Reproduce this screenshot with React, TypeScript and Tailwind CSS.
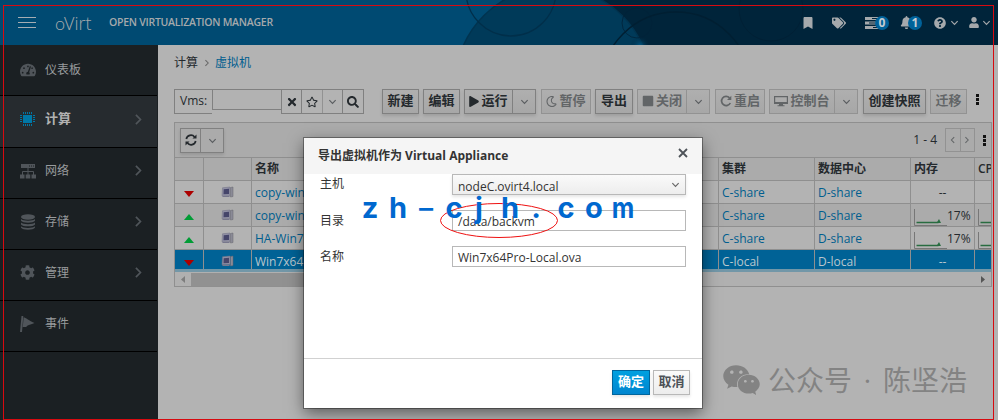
import { ReactNode } from 'react';
import {
  FaBell,
  FaBookmark,
  FaCog,
  FaPlay,
  FaQuestionCircle,
  FaRegMoon,
  FaRegStar,
  FaSearch,
  FaSquare,
  FaTachometerAlt,
  FaTags,
  FaTimes,
  FaUser,
  FaWeixin,
} from 'react-icons/fa';

type ChevronProps = { className?: string; direction?: 'down' | 'left' | 'right' };

const chevronPaths = {
  down: 'M1.5 3.5L5 7L8.5 3.5',
  left: 'M6.5 1.5L3 5L6.5 8.5',
  right: 'M3 1.5L6.5 5L3 8.5',
};

const Chevron = ({ className = 'size-[9px] text-[#5a5d60]', direction = 'down' }: ChevronProps) => (
  <svg viewBox="0 0 10 10" className={className} fill="none" stroke="currentColor" strokeWidth="1.3">
    <path d={chevronPaths[direction]} />
  </svg>
);

const ChipIcon = () => (
  <svg viewBox="0 0 16 16" className="size-4 text-[#0077a6]" fill="currentColor">
    <rect x="3" y="4" width="9" height="8" />
    <path
      d="M3.5 1v2M5.5 1v2M7.5 1v2M9.5 1v2M11.5 1v2M3.5 13v2M5.5 13v2M7.5 13v2M9.5 13v2M11.5 13v2M0 4.5h2M0 6.5h2M0 8.5h2M0 10.5h2M13 4.500h2M13 6.500h2M13 8.500h2M13 10.500h2"
      stroke="currentColor"
      strokeWidth="1"
    />
  </svg>
);

const NetworkIcon = () => (
  <svg viewBox="0 0 16 16" className="size-4" fill="currentColor">
    <path d="M1 1h14v4H1zM0 11.500h4.500v4H0zM5.700 11.500h4.600v4H5.700zM11.500 11.500H16v4h-4.500z" />
    <path d="M8 5v7M2.500 12V8.500h11V12" fill="none" stroke="currentColor" />
    <path d="M9 3h1M11 3h1M13 3h1" stroke="#1b2023" />
  </svg>
);

const StorageIcon = () => (
  <svg viewBox="0 0 16 16" className="size-4" fill="currentColor">
    <ellipse cx="8" cy="3" rx="7" ry="2.7" />
    <path d="M1 5c1.500 2.300 12.500 2.300 14 0v1.800c-1.500 2.600-12.500 2.600-14 0zM1 8.600c1.500 2.300 12.500 2.300 14 0v1.800c-1.500 2.600-12.500 2.600-14 0zM1 12.200c1.500 2.300 12.500 2.300 14 0v1.400c-1.500 3-12.500 3-14 0z" />
  </svg>
);

const FlagIcon = () => (
  <svg viewBox="0 0 16 16" className="size-4" fill="currentColor">
    <path d="M1.500 0h1.800L2 16H0zM3.600 1.500C6 1.500 8 4 14.500 7 11 8.500 8 8.500 6 11L2.800 11z" />
  </svg>
);

const RefreshIcon = () => (
  <svg viewBox="0 0 12 12" className="size-3" fill="none" stroke="currentColor" strokeWidth="1.7">
    <path d="M1.300 5A4.700 4.700 0 0 1 9.600 3M10.700 7A4.700 4.700 0 0 1 2.400 9" />
    <path d="M11.500.6v4H7.500zM.5 11.400v-4h4z" fill="currentColor" stroke="none" />
  </svg>
);

const RestartIcon = () => (
  <svg viewBox="0 0 12 12" className="size-3" fill="none" stroke="currentColor" strokeWidth="1.700">
    <path d="M9.500 2.800A4.600 4.600 0 1 0 10.300 8" />
    <path d="M11.300.7v4.300H7z" fill="currentColor" stroke="none" />
  </svg>
);

const ScreenIcon = () => (
  <svg viewBox="0 0 14 12" className="h-3 w-[14px]" fill="currentColor">
    <path fillRule="evenodd" d="M0 1h14v8H9v1.200h1.500v1H3.500v-1H5V9H0zM1.200 2.200v4.800h11.600V2.200z" />
  </svg>
);

const VmIcon = () => (
  <svg viewBox="0 0 13 12" className="h-3 w-[13px]">
    <path d="M9.500 1.500L12 1v9.500l-2.500.5z" fill="#8a8a96" stroke="#66666f" strokeWidth=".5" />
    <path d="M1.500 1.800L9 1v8.500l-8 .3z" fill="#9090a4" stroke="#707084" strokeWidth=".5" />
    <path d="M2.700 3.200L8 2.700v5.200l-5.500.4z" fill="#45456a" />
    <path d="M1.500 10h7v1h-7z" fill="#77778c" />
  </svg>
);

const Sparkline = () => (
  <svg viewBox="0 0 33 17" className="h-[17px] w-[33px] shrink-0">
    <path d="M.5 0v16.500H33" fill="none" stroke="#777" />
    <path d="M2.500 13.500h22" stroke="#286c40" strokeWidth="1.500" />
    <path d="M22.500 14l2.500-4 2 4z" fill="#286c40" />
  </svg>
);

const Kebab = ({ className }: { className: string }) => (
  <div className={`flex w-[3px] flex-col gap-px ${className}`}>
    <i className="size-[3px] bg-[#111]" />
    <i className="size-[3px] bg-[#111]" />
    <i className="size-[3px] bg-[#111]" />
  </div>
);

const menu = [
  { label: '仪表板', icon: <FaTachometerAlt className="size-4" />, height: 'h-[51px] pb-px', arrow: false },
  { label: '计算', icon: <ChipIcon />, height: 'h-[52px] pb-[5px]', arrow: true, active: true },
  { label: '网络', icon: <NetworkIcon />, height: 'h-[51px] pb-[5px]', arrow: true },
  { label: '存储', icon: <StorageIcon />, height: 'h-[51px] pb-[5px]', arrow: true },
  { label: '管理', icon: <FaCog className="size-[15px]" />, height: 'h-[51px] pb-[5px]', arrow: true },
  { label: '事件', icon: <FlagIcon />, height: 'h-[51px] pb-1', arrow: false },
];

const rows = [
  { name: 'copy-win7x64', cluster: 'C-share', center: 'D-share', up: false, memory: '' },
  { name: 'copy-win7x64-2', cluster: 'C-share', center: 'D-share', up: true, memory: '17%' },
  { name: 'HA-Win7x64', cluster: 'C-share', center: 'D-share', up: true, memory: '17%' },
  { name: 'Win7x64Pro', cluster: 'C-local', center: 'D-local', up: false, memory: '', selected: true },
];

type ActionProps = { label: string; width: string; icon?: ReactNode; split?: boolean; disabled?: boolean };

const actions: (ActionProps & { margin: string })[] = [
  { label: '新建', width: 'w-[37px]', margin: 'ml-[18px]' },
  { label: '编辑', width: 'w-[37px]', margin: 'ml-1' },
  { label: '运行', width: 'w-[72px]', margin: 'ml-1', icon: <FaPlay className="h-[11px] w-[10px]" />, split: true },
  { label: '暂停', width: 'w-[50px]', margin: 'ml-[5px]', icon: <FaRegMoon className="size-[11px]" />, disabled: true },
  { label: '导出', width: 'w-[38px]', margin: 'ml-1' },
  { label: '关闭', width: 'w-[73px]', margin: 'ml-1', icon: <FaSquare className="size-[12px]" />, split: true, disabled: true },
  { label: '重启', width: 'w-[50px]', margin: 'ml-[5px]', icon: <RestartIcon />, disabled: true },
  { label: '控制台', width: 'w-[89px]', margin: 'ml-1', icon: <ScreenIcon />, split: true, disabled: true },
  { label: '创建快照', width: 'w-[63px]', margin: 'ml-[5px]' },
  { label: '迁移', width: 'w-[37px]', margin: 'ml-1', disabled: true },
];

const Action = ({ label, width, icon, split, disabled }: ActionProps) => (
  <button
    className={`flex h-[25px] shrink-0 border bg-linear-to-b from-[#afafaf] to-[#a7a7a7] text-[13px] font-bold ${width} ${
      disabled ? 'border-[#929292] text-[#626567]' : 'border-[#808080] text-[#24292d] shadow-[0_2px_3px_rgba(0,0,0,0.12)]'
    }`}
  >
    <span className="flex h-full flex-1 items-center justify-center gap-[2px] pb-px whitespace-nowrap">
      {icon}
      {label}
    </span>
    {split && (
      <span className="flex h-full w-[23px] items-center justify-center border-l border-inherit">
        <Chevron />
      </span>
    )}
  </button>
);

const Header = () => (
  <header className="relative h-[45px] w-full shrink-0 overflow-hidden bg-[#00243a] text-[#a5a9ac]">
    <svg viewBox="0 0 998 45" className="absolute inset-0 h-[45px] w-[998px]" fill="none">
      <defs>
        <radialGradient id="glow" gradientUnits="userSpaceOnUse" cx="640" cy="46" r="10">
          <stop offset="0" stopColor="#005a88" />
          <stop offset="1" stopColor="#00243a" stopOpacity="0" />
        </radialGradient>
      </defs>
      <path d="M0 0H503Q479 16 464 45H0z" fill="#004a72" />
      <circle cx="553" cy="85" r="98" fill="#003a59" />
      <circle cx="553" cy="85" r="98" stroke="#003450" strokeWidth="1.500" />
      <circle cx="511" cy="-9" r="45" stroke="#002f4a" strokeWidth="1.300" />
      <circle cx="637" cy="23" r="15" stroke="#002238" strokeWidth=".8" />
      <circle cx="676" cy="87" r="75" stroke="#001f32" strokeWidth="1.500" />
      <circle cx="771" cy="9" r="32" stroke="#002033" strokeWidth=".8" />
      <circle cx="640" cy="46" r="10" fill="url(#glow)" />
    </svg>
    <div className="relative flex h-full items-center">
      <div className="ml-[18px] flex w-[18px] flex-col gap-[4px]">
        <i className="h-px bg-[#a5adb3]" />
        <i className="h-px bg-[#a5adb3]" />
        <i className="h-px bg-[#a5adb3]" />
      </div>
      <span className="ml-[19px] w-[54px] font-[Lato] text-[18px] leading-none font-light">
        o<span className="-ml-px font-['Open_Sans']">Virt</span>
      </span>
      <span className="text-[10.5px] font-semibold tracking-[-0.26px] whitespace-nowrap">OPEN VIRTUALIZATION MANAGER</span>
      <div className="ml-auto flex items-center">
        <FaBookmark className="h-3 w-[10px]" />
        <FaTags className="ml-[19px] size-[14px]" />
        <div className="ml-[19px] flex items-center">
          <svg viewBox="0 0 14 12" className="h-3 w-[14px]" fill="currentColor">
            <path d="M0 0h14v3H0zM0 4.500h14v3H0zM0 9h14v3H0z" />
            <path d="M7 1.500h5M4 6h6M8 10.500h4" stroke="#00243a" />
          </svg>
          <b className="-ml-[4px] flex size-[14px] items-center justify-center rounded-full bg-[#00629a] text-[12px] text-[#c3ccd2]">0</b>
        </div>
        <div className="ml-[11px] flex items-center">
          <FaBell className="size-[13px]" />
          <b className="-ml-[5px] flex size-[14px] items-center justify-center rounded-full bg-[#00629a] text-[12px] text-[#c3ccd2]">1</b>
        </div>
        <FaQuestionCircle className="ml-[12px] size-[12px]" />
        <Chevron className="ml-[4px] size-[9px]" />
        <FaUser className="ml-[10px] h-[11px] w-[10px]" />
        <Chevron className="mr-[7px] ml-[3px] size-[9px]" />
      </div>
    </div>
  </header>
);

const Sidebar = () => (
  <nav className="w-[158px] shrink-0 bg-[#1b2023]">
    {menu.map((item) => (
      <a
        key={item.label}
        className={`flex w-[157px] items-center border-b border-black pl-5 ${item.height} ${
          item.active ? 'bg-[#262b2f] font-bold text-[#b2b2b2]' : 'text-[#989b9d]'
        }`}
      >
        <span className="w-[25px] text-[#50555a]">{item.icon}</span>
        <span className={item.active ? 'text-[13px]' : 'text-[12px]'}>{item.label}</span>
        {item.arrow && <Chevron direction="right" className="mr-[12px] ml-auto size-[13px] text-[#50555a]" />}
      </a>
    ))}
  </nav>
);

const VmTable = () => (
  <section className="mt-2 h-[165px] w-[818px] overflow-hidden border border-[#8f8f8f] bg-[#ababab]">
    <div className="flex h-[34px] items-center">
      <div className="ml-[5px] flex h-[25px] w-[44px] border border-[#808080] text-[#24292d] shadow-[0_2px_3px_rgba(0,0,0,0.12)]">
        <span className="flex w-5 items-center justify-center border-r border-[#808080]">
          <RefreshIcon />
        </span>
        <span className="flex flex-1 items-center justify-center">
          <Chevron />
        </span>
      </div>
      <span className="ml-auto text-[12px]">1 - 4</span>
      <div className="ml-2 flex h-6 w-[30px] border border-[#929292] text-[#626567]">
        <span className="flex flex-1 items-center justify-center border-r border-[#929292]">
          <Chevron direction="left" className="size-2" />
        </span>
        <span className="flex flex-1 items-center justify-center">
          <Chevron direction="right" className="size-2" />
        </span>
      </div>
      <Kebab className="mr-[5px] ml-2" />
    </div>
    <div className="grid h-6 grid-cols-[29px_48px_467px_96px_96px_64px_17px] border-y border-[#8f8f8f] text-[12px] leading-[22px] font-semibold text-[#24292d] *:border-r *:border-[#8f8f8f] *:pl-[3px]">
      <span />
      <span />
      <span>名称</span>
      <span>集群</span>
      <span>数据中心</span>
      <span>内存</span>
      <span className="overflow-hidden">CPU</span>
    </div>
    {rows.map((row, i) => (
      <div
        key={row.name}
        className={`grid grid-cols-[29px_48px_467px_96px_96px_64px_17px] overflow-hidden text-[12px] *:border-r *:border-[#8f8f8f] ${
          row.selected
            ? 'h-[22px] border-b-[3px] border-[#7297a8] bg-[#006296] leading-[23px] text-[#b9c6cd]'
            : 'h-[23px] border-b border-[#8f8f8f] leading-[23px] text-[#005e8f]'
        } ${i % 2 === 0 && !row.selected ? 'bg-[#b3b3b3]' : ''}`}
      >
        <span className="flex h-[23px] items-center justify-center">
          <svg viewBox="0 0 10 5" preserveAspectRatio="none" className="mt-[3px] h-[6px] w-[10px]">
            <path d={row.up ? 'M0 5L5 0L10 5z' : 'M0 0h10L5 5z'} fill={row.up ? '#009c35' : '#ac0000'} />
          </svg>
        </span>
        <span className="flex h-[23px] items-center justify-center pb-px">
          <VmIcon />
        </span>
        <span className="pl-[3px]">{row.name}</span>
        <span className="pl-[3px]">{row.cluster}</span>
        <span className="pl-[3px]">{row.center}</span>
        {row.memory ? (
          <span className="flex items-end pl-[3px] text-[#24292d]">
            <span className="mb-px">
              <Sparkline />
            </span>
            {row.memory}
          </span>
        ) : (
          <span className={row.selected ? 'text-center' : 'text-center text-[#24292d]'}>--</span>
        )}
        <span className="flex items-end overflow-hidden pl-[3px]">
          {row.memory && (
            <span className="mb-px">
              <Sparkline />
            </span>
          )}
        </span>
      </div>
    ))}
    <div className="flex h-[14px] items-center bg-[#b0b0b0]">
      <svg viewBox="0 0 4 7" className="mx-[6px] h-[7px] w-1">
        <path d="M4 0v7L0 3.500z" fill="#7d7d7d" />
      </svg>
      <div className="h-[13px] w-[450px] bg-[#919191]" />
      <svg viewBox="0 0 4 7" className="mr-[6px] ml-auto h-[7px] w-1">
        <path d="M0 0v7l4-3.500z" fill="#555" />
      </svg>
    </div>
  </section>
);

const ExportDialog = () => (
  <div className="absolute top-[138px] left-[304px] flex h-[270px] w-[398px] flex-col bg-white text-[12px] text-[#333] shadow-[0_0_0_1px_rgba(0,0,0,0.35),0_5px_15px_rgba(0,0,0,0.5)]">
    <div className="flex h-9 shrink-0 items-center justify-between bg-[#f5f5f5] pr-[14px] pl-[14px]">
      <h2 className="font-bold">导出虚拟机作为 Virtual Appliance</h2>
      <svg viewBox="0 0 10 10" className="mb-[6px] size-[10px]" stroke="#4d5258" strokeWidth="1.800">
        <path d="M1 1l8 8M9 1L1 9" />
      </svg>
    </div>
    <div className="flex h-[184px] shrink-0 flex-col gap-[15px] px-4">
      <div className="flex h-[21px]">
        <label className="w-[132px] leading-[20px]">主机</label>
        <div className="flex flex-1 items-center justify-between border border-[#b8b8b8] bg-linear-to-b from-[#fafafa] to-[#ededed] pr-[5px] pl-[5px] shadow-[0_2px_3px_rgba(3,3,3,0.1)]">
          <span className="mt-[4px]">nodeC.ovirt4.local</span>
          <Chevron className="mb-px size-[9px] text-[#666]" />
        </div>
      </div>
      <div className="flex h-[21px]">
        <label className="w-[132px] leading-[21px]">目录</label>
        <div className="flex-1 border border-[#b8b8b8] pl-[5px] leading-[22px]">/data/backvm</div>
      </div>
      <div className="flex h-[21px]">
        <label className="w-[132px] leading-[21px]">名称</label>
        <div className="flex-1 border border-[#b8b8b8] pl-[5px] leading-[22px]">Win7x64Pro-Local.ova</div>
      </div>
    </div>
    <div className="flex flex-1 justify-end gap-[3px] border-t border-[#d1d1d1] pt-[11px] pr-3 text-[13px] font-bold">
      <button className="h-[25px] w-[38px] border border-[#00659c] bg-linear-to-b from-[#00a0e0] to-[#0085cf] pb-0.5 text-white shadow-[0_2px_3px_rgba(3,3,3,0.1)]">
        确定
      </button>
      <button className="h-[25px] w-[37px] border border-[#b8b8b8] bg-linear-to-b from-[#fafafa] to-[#ededed] pb-0.5 text-[#4d5258] shadow-[0_2px_3px_rgba(3,3,3,0.1)]">
        取消
      </button>
    </div>
  </div>
);

const watermark = [
  { char: 'z', style: '' },
  { char: 'h', style: '' },
  { char: '-', style: 'scale-x-150 font-medium' },
  { char: 'c', style: '' },
  { char: 'j', style: '-translate-x-[3px]' },
  { char: 'h', style: '' },
  { char: '.', style: '-translate-x-[2px]' },
  { char: 'c', style: '' },
  { char: 'o', style: '' },
  { char: 'm', style: 'translate-x-px scale-x-85' },
];

const App = () => (
  <div className="relative flex h-[420px] w-[998px] flex-col overflow-hidden bg-[#b3b3b3] font-['Open_Sans','Noto_Sans_CJK_SC',sans-serif] text-[12px] text-[#24292d]">
    <Header />
    <div className="flex flex-1">
      <Sidebar />
      <main className="flex-1 pl-4">
        <div className="flex h-[44px] items-center gap-[4.500px] pb-[9px]">
          <span>计算</span>
          <Chevron direction="right" className="size-[8px] text-[#666]" />
          <span className="text-[#005e8f]">虚拟机</span>
        </div>
        <div className="flex h-[25px] items-start">
          <div className="flex h-[25px] w-[190px] items-start text-[#24292d]">
            <span className="h-[25px] w-[38px] border border-r-0 border-[#808080] pl-[5px] leading-[22px]">Vms:</span>
            <div className="h-[21px] w-[69px] border border-r-0 border-[#808080] bg-[#b2b2b2]" />
            <div className="flex h-[25px] flex-1 border border-[#808080] *:flex *:items-center *:justify-center">
              <span className="w-[20px] border-r border-[#808080]">
                <FaTimes className="size-[12px]" />
              </span>
              <span className="w-[21px] border-r border-[#929292]">
                <FaRegStar className="size-[12px]" />
              </span>
              <span className="w-5 border-r border-[#808080]">
                <Chevron />
              </span>
              <span className="flex-1">
                <FaSearch className="size-[12px]" />
              </span>
            </div>
          </div>
          {actions.map(({ margin, ...action }) => (
            <div key={action.label} className={margin}>
              <Action {...action} />
            </div>
          ))}
          <Kebab className="mt-[5px] ml-[9px]" />
        </div>
        <VmTable />
      </main>
    </div>

    <ExportDialog />

    <svg viewBox="0 0 120 36" className="absolute top-[202px] left-[439px] h-9 w-[120px]" fill="none">
      <ellipse cx="60" cy="18.500" rx="58.500" ry="17" stroke="#ee1111" />
    </svg>
    <div className="absolute top-[188px] left-[356px] flex font-[Inter] text-[29px] leading-[40px] font-bold text-[#0068cf]">
      {watermark.map(({ char, style }, i) => (
        <span key={i} className={`w-7 text-center ${style}`}>
          {char}
        </span>
      ))}
    </div>
    <div className="absolute top-[360px] left-[722px] flex h-10 items-center text-[28px] text-[#838383]">
      <FaWeixin className="mr-[7px] h-[34px] w-[39px]" />
      <span className="w-[84px] whitespace-nowrap">公众号</span>
      <span className="w-[31px] text-center">·</span>
      <span className="whitespace-nowrap">陈坚浩</span>
    </div>
    <div className="pointer-events-none absolute top-[5px] left-[3px] h-[415px] w-[991px] border border-[#d80a10]" />
  </div>
);

export default App;
